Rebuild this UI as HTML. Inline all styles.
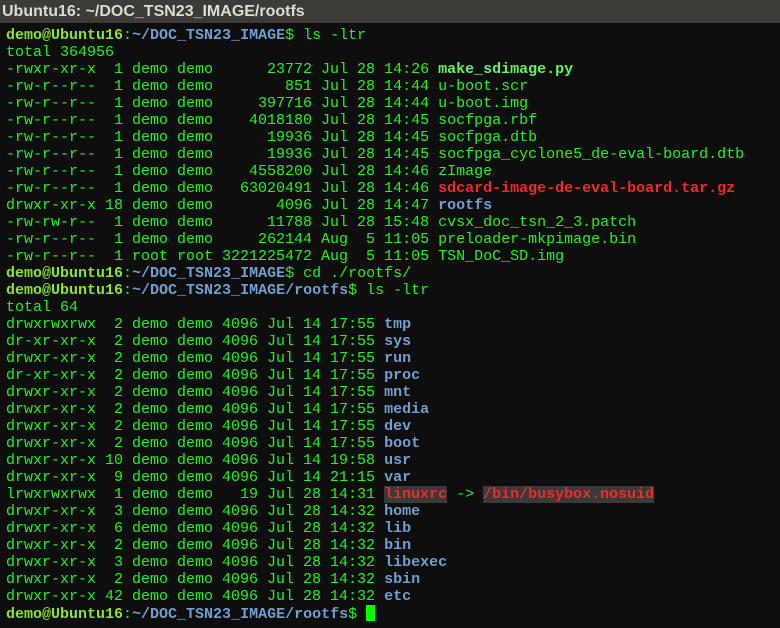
<!DOCTYPE html>
<html><head><style>
html,body{margin:0;padding:0;width:780px;height:628px;overflow:hidden;background:#0e0e0e}
.t{position:absolute;left:0;top:0;width:780px;height:23px;background:#3c3b37;color:#dfdbd2;font:bold 16px "Liberation Sans",sans-serif;line-height:23px;padding-left:2px;box-sizing:border-box}
pre{position:absolute;left:6px;top:27px;margin:0;font:15px/17px "Liberation Mono",monospace;color:#22f022;white-space:pre}
.p{color:#8ae234;font-weight:bold}.d{color:#729fcf;font-weight:bold}.r{color:#ef2929;font-weight:bold}.x{color:#66f066;font-weight:bold}
.l{background:#3a3a3a}
.c{display:inline-block;width:9px;height:16px;background:#00ff00;vertical-align:-3px}
</style></head><body>
<div class="t">Ubuntu16: ~/DOC_TSN23_IMAGE/rootfs</div>
<pre><span class="p">demo@Ubuntu16</span>:<span class="d">~/DOC_TSN23_IMAGE</span>$ ls -ltr
total 364956
-rwxr-xr-x  1 demo demo      23772 Jul 28 14:26 <span class="x">make_sdimage.py</span>
-rw-r--r--  1 demo demo        851 Jul 28 14:44 u-boot.scr
-rw-r--r--  1 demo demo     397716 Jul 28 14:44 u-boot.img
-rw-r--r--  1 demo demo    4018180 Jul 28 14:45 socfpga.rbf
-rw-r--r--  1 demo demo      19936 Jul 28 14:45 socfpga.dtb
-rw-r--r--  1 demo demo      19936 Jul 28 14:45 socfpga_cyclone5_de-eval-board.dtb
-rw-r--r--  1 demo demo    4558200 Jul 28 14:46 zImage
-rw-r--r--  1 demo demo   63020491 Jul 28 14:46 <span class="r">sdcard-image-de-eval-board.tar.gz</span>
drwxr-xr-x 18 demo demo       4096 Jul 28 14:47 <span class="d">rootfs</span>
-rw-rw-r--  1 demo demo      11788 Jul 28 15:48 cvsx_doc_tsn_2_3.patch
-rw-r--r--  1 demo demo     262144 Aug  5 11:05 preloader-mkpimage.bin
-rw-r--r--  1 root root 3221225472 Aug  5 11:05 TSN_DoC_SD.img
<span class="p">demo@Ubuntu16</span>:<span class="d">~/DOC_TSN23_IMAGE</span>$ cd ./rootfs/
<span class="p">demo@Ubuntu16</span>:<span class="d">~/DOC_TSN23_IMAGE/rootfs</span>$ ls -ltr
total 64
drwxrwxrwx  2 demo demo 4096 Jul 14 17:55 <span class="d">tmp</span>
dr-xr-xr-x  2 demo demo 4096 Jul 14 17:55 <span class="d">sys</span>
drwxr-xr-x  2 demo demo 4096 Jul 14 17:55 <span class="d">run</span>
dr-xr-xr-x  2 demo demo 4096 Jul 14 17:55 <span class="d">proc</span>
drwxr-xr-x  2 demo demo 4096 Jul 14 17:55 <span class="d">mnt</span>
drwxr-xr-x  2 demo demo 4096 Jul 14 17:55 <span class="d">media</span>
drwxr-xr-x  2 demo demo 4096 Jul 14 17:55 <span class="d">dev</span>
drwxr-xr-x  2 demo demo 4096 Jul 14 17:55 <span class="d">boot</span>
drwxr-xr-x 10 demo demo 4096 Jul 14 19:58 <span class="d">usr</span>
drwxr-xr-x  9 demo demo 4096 Jul 14 21:15 <span class="d">var</span>
lrwxrwxrwx  1 demo demo   19 Jul 28 14:31 <span class="r l">linuxrc</span> -&gt; <span class="r l">/bin/busybox.nosuid</span>
drwxr-xr-x  3 demo demo 4096 Jul 28 14:32 <span class="d">home</span>
drwxr-xr-x  6 demo demo 4096 Jul 28 14:32 <span class="d">lib</span>
drwxr-xr-x  2 demo demo 4096 Jul 28 14:32 <span class="d">bin</span>
drwxr-xr-x  3 demo demo 4096 Jul 28 14:32 <span class="d">libexec</span>
drwxr-xr-x  2 demo demo 4096 Jul 28 14:32 <span class="d">sbin</span>
drwxr-xr-x 42 demo demo 4096 Jul 28 14:32 <span class="d">etc</span>
<span class="p">demo@Ubuntu16</span>:<span class="d">~/DOC_TSN23_IMAGE/rootfs</span>$ <span class="c"></span></pre>
</body></html>
